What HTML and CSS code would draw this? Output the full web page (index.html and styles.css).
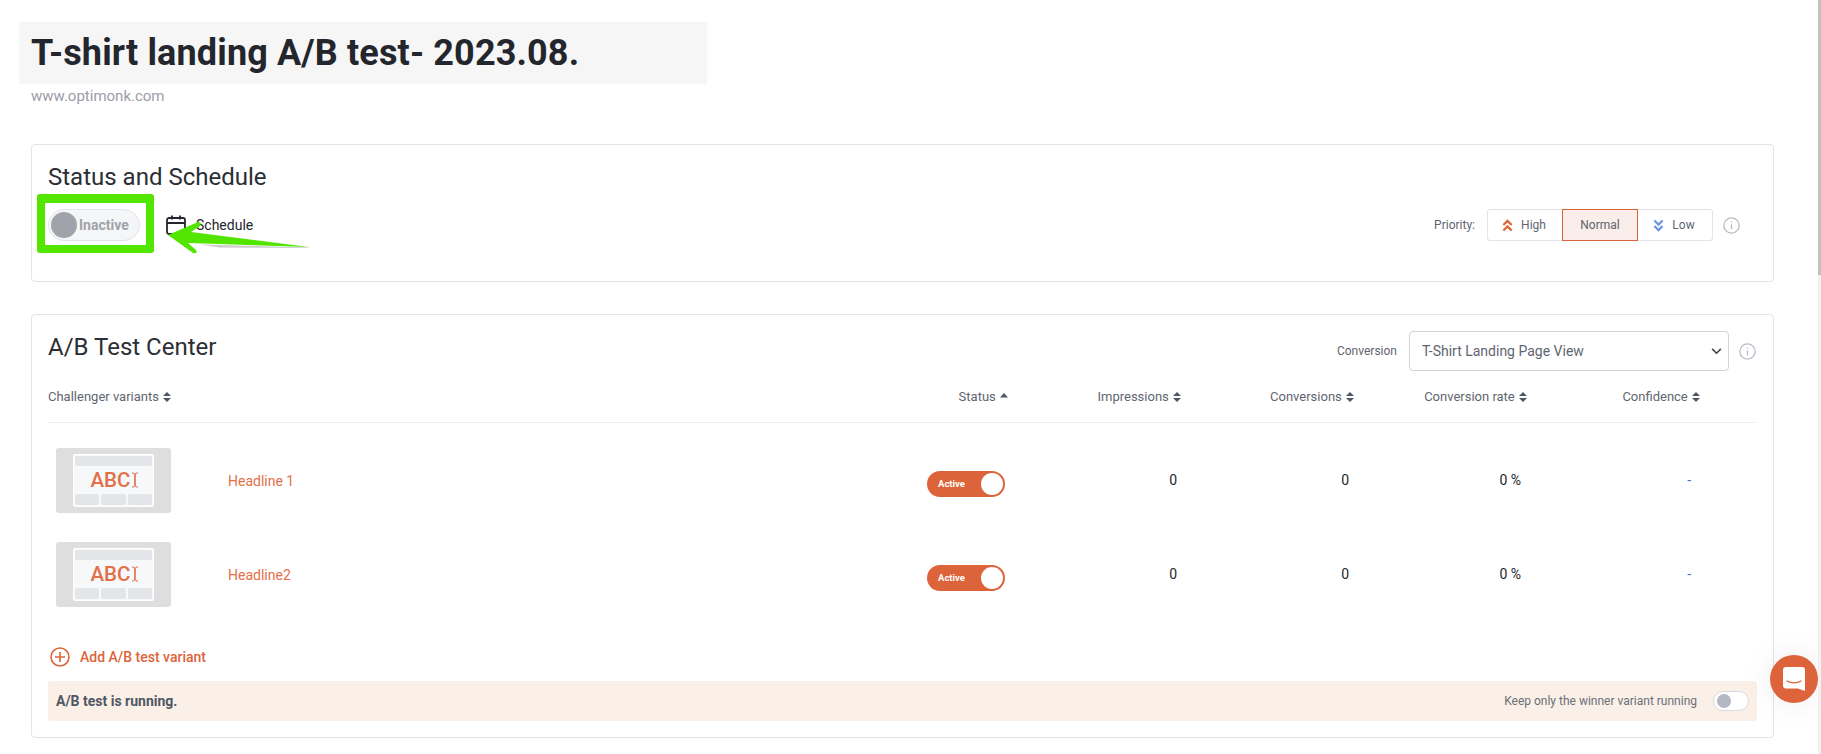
FILE: index.html
```html
<!DOCTYPE html>
<html lang="en">
<head>
<meta charset="utf-8">
<title>T-shirt landing A/B test</title>
<link rel="stylesheet" href="styles.css">
</head>
<body>
<main class="page">
  <header class="head">
    <h1 class="title">T-shirt landing A/B test- 2023.08.</h1>
    <div class="domain">www.optimonk.com</div>
  </header>

  <section class="card status-card">
    <h2 class="card-title">Status and Schedule</h2>
    <div class="status-row">
      <div class="status-left">
        <div class="big-toggle"><span class="big-knob"></span><span class="big-label">Inactive</span></div>
        <svg class="cal" viewBox="0 0 20 20" width="20" height="20" fill="none" stroke="#23262d" stroke-width="1.8"><rect x="1" y="3" width="18" height="16" rx="2"/><path d="M1 8h18M6 0.5v4M14 0.5v4"/></svg>
        <span class="schedule">Schedule</span>
      </div>
      <div class="priority">
        <span class="priority-label">Priority:</span>
        <div class="segments">
          <div class="seg seg-side"><svg viewBox="0 0 12 14" width="11" height="13" fill="none" stroke="#dd643a" stroke-width="2.4"><path d="M1.500 6.500L6 2l4.500 4.500M1.500 12.500L6 8l4.500 4.500"/></svg><span>High</span></div>
          <div class="seg seg-on"><span>Normal</span></div>
          <div class="seg seg-side"><svg viewBox="0 0 12 14" width="11" height="13" fill="none" stroke="#6f94e4" stroke-width="2.4"><path d="M1.500 1.500L6 6l4.500-4.500M1.500 7.500L6 12l4.500-4.500"/></svg><span>Low</span></div>
        </div>
        <svg class="info" viewBox="0 0 16 16" width="17" height="17" fill="none" stroke="#b6bac3" stroke-width="1.2"><circle cx="8" cy="8" r="7.2"/><path d="M8 7v4.500M8 4.200v1.200"/></svg>
      </div>
    </div>
  </section>

  <section class="card test-card">
    <div class="test-head">
      <h2 class="card-title">A/B Test Center</h2>
      <div class="conversion">
        <span class="conv-label">Conversion</span>
        <div class="select"><span>T-Shirt Landing Page View</span><svg viewBox="0 0 12 8" width="11" height="7" fill="none" stroke="#3f4550" stroke-width="1.8"><path d="M1 1l5 5 5-5"/></svg></div>
        <svg class="info" viewBox="0 0 16 16" width="17" height="17" fill="none" stroke="#b6bac3" stroke-width="1.2"><circle cx="8" cy="8" r="7.2"/><path d="M8 7v4.500M8 4.200v1.200"/></svg>
      </div>
    </div>

    <div class="grid grid-head">
      <div class="th th-first">Challenger variants <svg class="sort" viewBox="0 0 8 10" width="8" height="10"><path d="M4 0l4 4H0zM4 10l4-4H0z"/></svg></div>
      <div class="th">Status <svg class="sort sort-up" viewBox="0 0 8 5" width="8" height="5"><path d="M4 0l4 4.500H0z"/></svg></div>
      <div class="th">Impressions <svg class="sort" viewBox="0 0 8 10" width="8" height="10"><path d="M4 0l4 4H0zM4 10l4-4H0z"/></svg></div>
      <div class="th">Conversions <svg class="sort" viewBox="0 0 8 10" width="8" height="10"><path d="M4 0l4 4H0zM4 10l4-4H0z"/></svg></div>
      <div class="th">Conversion rate <svg class="sort" viewBox="0 0 8 10" width="8" height="10"><path d="M4 0l4 4H0zM4 10l4-4H0z"/></svg></div>
      <div class="th">Confidence <svg class="sort" viewBox="0 0 8 10" width="8" height="10"><path d="M4 0l4 4H0zM4 10l4-4H0z"/></svg></div>
    </div>

    <div class="rows">
      <div class="grid row">
        <div class="variant">
          <div class="thumb"><div class="thumb-in">
            <div class="bar"></div>
            <div class="abc">ABC<svg class="caret" viewBox="0 0 8 16" width="8" height="16" fill="none" stroke="#dd643a" stroke-width="1"><path d="M1 1c2 0 3 .5 3 2v10c0 1.500-1 2-3 2M7 1c-2 0-3 .5-3 2v10c0 1.500 1 2 3 2"/></svg></div>
            <div class="blocks"><i></i><i></i><i></i></div>
          </div></div>
          <span class="name">Headline 1</span>
        </div>
        <div class="cell cell-status"><div class="toggle"><span>Active</span><b></b></div></div>
        <div class="cell num-a">0</div>
        <div class="cell num-b">0</div>
        <div class="cell num-c">0 %</div>
        <div class="cell num-d">-</div>
      </div>

      <div class="grid row">
        <div class="variant">
          <div class="thumb"><div class="thumb-in">
            <div class="bar"></div>
            <div class="abc">ABC<svg class="caret" viewBox="0 0 8 16" width="8" height="16" fill="none" stroke="#dd643a" stroke-width="1"><path d="M1 1c2 0 3 .5 3 2v10c0 1.500-1 2-3 2M7 1c-2 0-3 .5-3 2v10c0 1.500 1 2 3 2"/></svg></div>
            <div class="blocks"><i></i><i></i><i></i></div>
          </div></div>
          <span class="name">Headline2</span>
        </div>
        <div class="cell cell-status"><div class="toggle"><span>Active</span><b></b></div></div>
        <div class="cell num-a">0</div>
        <div class="cell num-b">0</div>
        <div class="cell num-c">0 %</div>
        <div class="cell num-d">-</div>
      </div>
    </div>

    <div class="add">
      <svg viewBox="0 0 20 20" width="20" height="20" fill="none" stroke="#dd643a" stroke-width="1.6"><circle cx="10" cy="10" r="9"/><path d="M10 5v10M5 10h10"/></svg>
      <span>Add A/B test variant</span>
    </div>

    <div class="banner">
      <strong>A/B test is running.</strong>
      <div class="keep"><span>Keep only the winner variant running</span><div class="mini"><b></b></div></div>
    </div>
  </section>
</main>

<div class="mark"></div>
<svg class="arrow" viewBox="0 0 160 50" width="160" height="50"><path class="arrow-shadow" d="M40 33.500L149 36.500L149 37L60 36.500z"/><path class="arrow-fill" d="M8 24L38 11Q42 11 40 15L31 21L149 36L28 32L36 39Q38 43 33 42z"/></svg>

<button class="chat" type="button" aria-label="Chat">
  <svg viewBox="0 0 22 24" width="22" height="24"><path d="M3 0h16a3 3 0 0 1 3 3v21l-7-2.500H3a3 3 0 0 1-3-3V3a3 3 0 0 1 3-3z" fill="#fff"/><path d="M4 14c4 2.500 10 2.500 14 0" fill="none" stroke="#dd643a" stroke-width="1.300" stroke-linecap="round"/></svg>
</button>
<div class="scrollbar"><div class="scroll-thumb"></div></div>
</body>
</html>
```

FILE: styles.css
```css
* { box-sizing: border-box; }
html, body { margin: 0; height: 754px; overflow: hidden; background: #fff; }
body { font-family: Roboto, "Liberation Sans", sans-serif; color: #23262d; position: relative; }

.page { padding: 22px 47px 0 31px; }
.head { height: 122px; }
.title {
  margin: 0 0 0 -12px; width: 688px; height: 62px; padding-left: 12px;
  background: #f6f6f6; font-size: 36px; font-weight: 700; line-height: 62px; letter-spacing: .14px;
}
.domain { font-size: 15px; color: #9a9da6; line-height: 17px; margin-top: 4px; }

.card { border: 1px solid #e3e4e8; border-radius: 4px; background: #fff; }
.status-card { height: 138px; padding: 16px 16px 0; }
.test-card { height: 424px; margin-top: 32px; padding: 16px 16px 0; }
.card-title { margin: 0; font-size: 24px; font-weight: 400; line-height: 32px; color: #2b2e35; }

.status-row { display: flex; justify-content: space-between; align-items: center; margin-top: 16px; padding-right: 17px; }
.status-left { display: flex; align-items: center; }
.big-toggle {
  display: flex; align-items: center; width: 92px; height: 32px; padding-left: 2px;
  border: 1px solid #e3e4e8; border-radius: 16px; background: #f5f6f8;
}
.big-knob { width: 26px; height: 26px; border-radius: 50%; background: #a1a3aa; }
.big-label { margin-left: 2px; font-size: 14px; font-weight: 700; color: #a1a3aa; }
.cal { margin-left: 26px; }
.schedule { margin-left: 10px; font-size: 14px; color: #23262d; }

.priority { display: flex; align-items: center; }
.priority-label { font-size: 12px; color: #5f6570; margin-right: 12px; }
.segments { display: flex; height: 32px; width: 226px; border: 1px solid #e3e4e8; border-radius: 3px; }
.seg { flex: 1; display: flex; align-items: center; justify-content: center; gap: 8px; font-size: 12px; color: #5f6570; }
.seg-side { padding-right: 2px; }
.seg-on { flex: none; width: 76px; margin: -1px 0; background: #f9eee9; border: 1px solid #dd643a; }
.info { margin-left: 10px; }

.test-head { display: flex; justify-content: space-between; align-items: flex-start; padding-right: 1px; }
.conversion { display: flex; align-items: center; }
.conv-label { font-size: 12px; color: #5f6570; margin-right: 12px; }
.select {
  display: flex; align-items: center; justify-content: space-between;
  width: 320px; height: 40px; padding: 0 6px 0 12px;
  border: 1px solid #cfd2d8; border-radius: 4px; font-size: 14px; color: #5f6570;
}

.grid { display: grid; grid-template-columns: 1fr 120px 173px 173px 173px 173px; padding-right: 57px; }
.grid-head { height: 40px; margin-top: 12px; border-bottom: 1px solid #eeeff1; }
.th { font-size: 13px; color: #5f6570; text-align: right; line-height: 18px; padding-top: 5px; }
.th-first { text-align: left; }
.sort { fill: #505763; margin-left: 1px; vertical-align: -1px; }
.sort-up { vertical-align: 3px; }

.rows { margin-top: 11px; }
.row { height: 94px; align-items: start; }
.variant { display: flex; align-items: center; padding: 14px 0 0 8px; }
.thumb { width: 115px; height: 65px; padding: 6px 17px; background: #dedede; border-radius: 3px; flex: none; }
.thumb-in { height: 53px; width: 81px; padding: 1px; border: 1px solid #fff; background: #f7f8fa; border-radius: 2px; display: flex; flex-direction: column; }
.bar { height: 10px; background: #e4e5e9; border-radius: 2px; }
.abc { flex: 1; display: flex; align-items: center; justify-content: center; gap: 1px; padding-left: 3px; font-size: 20.5px; font-weight: 500; color: #e36f48; line-height: 1; }
.blocks { display: flex; gap: 2px; }
.blocks i { flex: 1; height: 11px; background: #e4e5e9; border-radius: 2px; }
.name { margin-left: 57px; font-size: 14px; color: #e36f48; }

.cell { font-size: 14px; color: #23262d; text-align: right; line-height: 18px; padding-top: 37px; }
.cell-status { display: flex; justify-content: flex-end; padding-right: 3px; padding-top: 37px; }
.toggle {
  display: flex; align-items: center; justify-content: space-between;
  width: 78px; height: 26px; padding: 0 2px 0 11px;
  background: #dd643a; border-radius: 13px;
}
.toggle span { font-size: 9.5px; font-weight: 700; color: #fff; }
.toggle b { width: 22px; height: 22px; border-radius: 50%; background: #fff; }
.num-a { padding-right: 4px; }
.num-b { padding-right: 5px; }
.num-c { padding-right: 6px; }
.num-d { padding-right: 9px; color: #3c6fe0; }

.add { display: flex; align-items: center; gap: 10px; height: 20px; margin-top: 25px; padding-left: 2px; font-size: 14px; font-weight: 500; color: #dd643a; }
.banner {
  display: flex; align-items: center; justify-content: space-between;
  height: 40px; margin-top: 14px; padding: 0 8px;
  background: #faf0e8; border-radius: 3px; font-size: 14px;
}
.banner strong { color: #505763; font-weight: 700; }
.keep { display: flex; align-items: center; gap: 16px; font-size: 12px; color: #6b6f78; }
.mini { width: 36px; height: 20px; padding: 2px 3px; border: 1px solid #d7d9de; border-radius: 10px; background: #fff; }
.mini b { display: block; width: 14px; height: 14px; border-radius: 50%; background: #b4b8c2; }

.mark { position: absolute; left: 37px; top: 194px; width: 117px; height: 59px; border: 8px solid #52e500; border-top-width: 9px; border-radius: 3px; }
.arrow { position: absolute; left: 160px; top: 211px; }
.arrow-shadow { fill: #8a8f86; opacity: .45; }
.arrow-fill { fill: #52e500; }

.chat {
  position: absolute; left: 1770px; top: 655px; width: 48px; height: 48px; padding: 0;
  display: flex; align-items: center; justify-content: center;
  border: 0; border-radius: 50%; background: #dd643a;
  box-shadow: 0 0 30px rgba(0,0,0,.08);
}
.scrollbar { position: absolute; right: 0; top: 0; width: 3px; height: 754px; background: #f1f1f1; }
.scroll-thumb { height: 275px; background: #c1c1c1; }
```
